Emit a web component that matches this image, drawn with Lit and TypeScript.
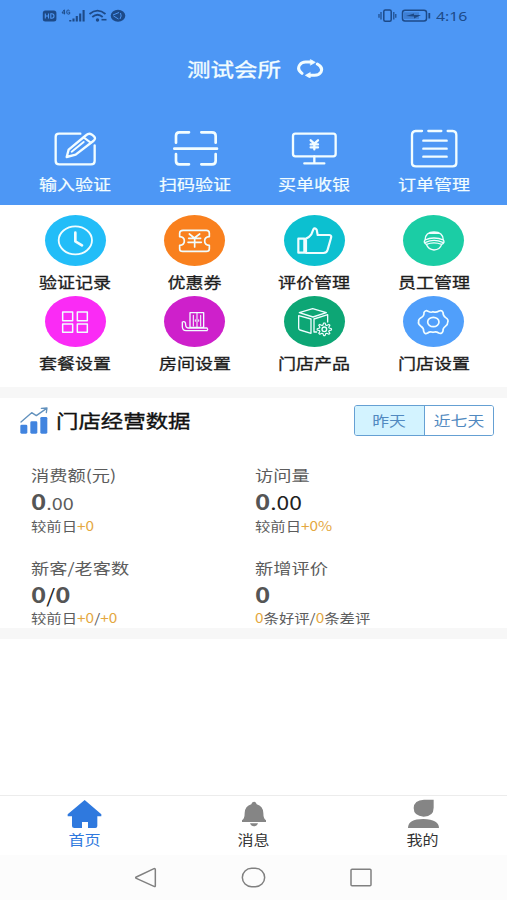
import { LitElement, html, css, svg, TemplateResult } from "lit";
import { customElement, state } from "lit/decorators.js";

// Icons are drawn in third-of-a-pixel units and keep their own viewBox origin.
const icon = (x: number, y: number, w: number, h: number, body: unknown): TemplateResult =>
  html`<svg width=${w / 3} height=${h / 3} viewBox="${x} ${y} ${w} ${h}" fill="none" stroke="currentColor" stroke-linecap="round" stroke-linejoin="round">${body}</svg>`;

const gear = (cx: number, cy: number, r: number, depth: number, teeth: number): string => {
  const pts: string[] = [];
  const n = teeth * 4;
  for (let i = 0; i < n; i++) {
    const a = ((i - 0.5) / n) * Math.PI * 2;
    const rr = i % 4 < 2 ? r : r - depth;
    pts.push(`${(cx + Math.cos(a) * rr * 1.08).toFixed(1)} ${(cy + Math.sin(a) * rr * 0.95).toFixed(1)}`);
  }
  return `M${pts.join("L")}Z`;
};

const icons = {
  edit: icon(160, 55, 136, 115, svg`<g stroke-width="7"><path d="M242 69H178Q168 69 168 78V151Q168 161 179 161H274Q285 161 285 151V104"/><path d="M201 139L207 117L260 73Q268 66 277 72L283 77Q290 84 281 91L228 132Z"/><path d="M252 80L273 96M216 123L252 94" stroke-width="6"/></g>`),
  scan: icon(514, 55, 142, 115, svg`<g stroke-width="8"><path d="M565 65H536Q526 65 526 75V96M602 65H634Q645 65 645 75V96M565 161H536Q526 161 526 151V130M602 161H634Q645 161 645 151V130M521 114H649"/></g>`),
  cash: icon(114, 55, 140, 115, svg`<g stroke-width="7"><rect x="120" y="69" width="128" height="68" rx="7"/><path d="M184 137V156M154 158H214"/><path d="M173 89L184 99L195 89M184 98V116M173 101H195M173 110H195"/></g>`),
  orders: icon(466, 52, 150, 120, svg`<g stroke-width="7"><path d="M505 61H486Q475 62 475 73V157Q475 167 487 167H597Q608 167 608 157V73Q608 62 597 61H582M524 61H563M509 90H579M509 114H579M509 138H579"/></g>`),
  clock: icon(170, 58, 114, 98, svg`<ellipse cx="228" cy="107" rx="50" ry="42" stroke-width="5.5"/><path d="M228 84V110L248 122" stroke-width="8"/>`),
  coupon: icon(530, 64, 112, 84, svg`<path d="M551 74H621Q630 74 630 82V93Q616 94 616 106Q616 118 630 119V130Q630 137 621 137H550Q541 137 541 130V119Q555 118 555 106Q555 94 541 93V82Q541 74 551 74Z" stroke-width="5"/><path d="M570 85L585 97L601 85M568 98H604M566 110H606M586 98V124" stroke-width="5"/>`),
  thumb: icon(128, 66, 112, 88, svg`<g stroke-width="6.5"><path d="M135 104H153V146H135ZM158 104Q166 102 174 91L180 76Q184 70 190 77L193 93H228Q236 94 233 102L223 137Q221 147 210 147H158Z"/></g>`),
  staff: icon(506, 70, 72, 70, svg`<g stroke-width="4"><path d="M515 103Q516 79 542 79Q569 79 570 103Q558 97 542 97Q527 97 515 103ZM517 110Q542 98 568 110M519 116Q542 107 565 116M515 103Q509 111 519 116Q525 132 542 133Q560 132 565 116Q576 111 570 103M525 83H560"/></g>`),
  package: icon(182, 310, 92, 78, svg`<g stroke-width="4.5"><rect x="190" y="319" width="30" height="26"/><rect x="234" y="319" width="30" height="26"/><rect x="190" y="355" width="30" height="25"/><rect x="234" y="355" width="30" height="25"/></g>`),
  room: icon(540, 314, 90, 70, svg`<g stroke-width="4"><rect x="570" y="322" width="41" height="44"/><path d="M580 330V362M591 323V365M602 330V362M586 343V348M596 343V348" stroke-width="3.2"/><path d="M547 350Q557 346 557 359Q557 368 567 368H621Q625 372 621 376H558Q548 376 547 365Z"/></g>`),
  product: icon(126, 302, 112, 94, svg`<g stroke-width="4"><path d="M136 322L176 310L217 322L177 335ZM134 331L171 341V384L138 374Q134 373 134 368ZM180 341L221 328V350M180 341V380H188"/><path d=${gear(211, 372, 20, 6, 8)} stroke-width="3.5"/><circle cx="211" cy="372" r="7"/></g>`),
  settings: icon(490, 304, 104, 90, svg`<g stroke-width="5"><path d="M514 320Q519 312 526 317Q536 322 541 318Q550 322 559 316Q567 312 571 320Q571 331 579 336Q589 342 585 350Q586 356 578 362Q570 368 571 376Q568 386 558 382Q550 376 541 380Q532 376 525 382Q516 387 513 377Q514 368 504 361Q495 354 498 348Q496 342 505 336Q515 331 514 320Z"/><ellipse cx="542" cy="349" rx="17" ry="14"/></g>`),
  chart: icon(56, 62, 92, 86, svg`<g stroke="none" fill="#4184df"><rect x="60" y="118" width="21" height="27" rx="4"/><rect x="90" y="108" width="21" height="37" rx="4"/><rect x="120" y="95" width="21" height="50" rx="4"/></g><path d="M62 110L94 82L108 91L139 69M123 69L140 68L138 82" stroke="#6291bd" stroke-width="4"/>`),
  swap: icon(126, 178, 84, 58, svg`<g stroke-width="9"><path d="M144 221Q128 209 137 196Q143 187 155 187H174M190 193Q208 203 201 217Q195 227 182 227H163"/></g><path d="M170 180L184 188L170 196ZM168 219L154 227L168 235Z" fill="currentColor" stroke-width="2"/>`),
  home: icon(204, 42, 106, 90, svg`<path d="M257 45L307 88V94H295V123Q295 129 289 129H267V111H249V129H226Q219 129 219 123V94H206V88Z" fill="currentColor" stroke="none"/>`),
  bell: icon(724, 46, 78, 82, svg`<path d="M755 58Q756 50 763 50Q770 50 771 58Q790 63 791 84Q791 101 799 106V111H727V106Q735 101 735 84Q736 63 755 58ZM751 115H775Q772 124 763 124Q754 124 751 115Z" fill="currentColor" stroke="none"/>`),
  person: icon(460, 42, 98, 90, svg`<path d="M540 44V68Q540 94 510 95Q480 93 480 69Q481 45 511 44ZM463 129Q463 102 509 102Q556 103 556 129Z" fill="currentColor" stroke="none"/>`),
  back: icon(402, 244, 72, 68, svg`<path d="M462 252Q466 251 466 255V303Q466 307 462 305L409 281Q405 279 409 277Z" stroke-width="4.5"/>`),
  circle: icon(724, 244, 76, 68, svg`<rect x="728" y="251" width="67" height="55" rx="28" stroke-width="4.5"/>`),
  square: icon(290, 244, 72, 68, svg`<rect x="296" y="254" width="60" height="49" rx="3" stroke-width="4.5"/>`),
};

const signals = html`<svg width="84" height="16" viewBox="0 0 84 16" fill="none" stroke="currentColor" stroke-width="1.6">
  <rect x=".8" y="2.5" width="13.6" height="11" rx="2.5" fill="currentColor" stroke="none"/>
  <path d="M3.3 5.5V10.5M6.5 5.5V10.5M3.3 8H6.5M8.8 5.8H9.8Q12 5.8 12 8T9.8 10.2H8.8Z" stroke="#4d97f5" stroke-width="1.1"/>
  <path d="M22.2 1.8L20 5H23.2M22.4 1.8V6.4M27.5 2.6Q24.8 1 24.8 4T27.7 5.8V4.2H26.4" stroke-width="1"/>
  <path d="M28.3 12V13.5M31.5 10.5V13.5M34.8 8V13.5M38.2 5.5V13.5M41.6 2V13.5" stroke-width="2.1"/>
  <path d="M47.5 6Q55.5-.8 63.5 6M50.3 9Q55.5 4.5 60.7 9" stroke-width="1.8"/><circle cx="55.5" cy="12" r="1.7" fill="currentColor" stroke="none"/><path d="M59.5 11.7H64.5" />
  <ellipse cx="76" cy="7.8" rx="7.3" ry="6" fill="currentColor" stroke="none"/><path d="M71 7L77 4.5M71.5 8L76.5 11M78.5 5Q80 8 78 11" stroke="#4d97f5" stroke-width="1"/>
</svg>`;

const battery = html`<svg width="54" height="16" viewBox="0 0 54 16" fill="none" stroke="currentColor" stroke-width="1.5">
  <rect x="5.8" y="2" width="7.4" height="11.2" rx="1.5"/><path d="M3 4V11.5M1 6V9.8M15.8 4V11.5M17.8 6V9.8" stroke-width="1.2"/>
  <rect x="24.5" y="2.3" width="24" height="10.6" rx="2.5"/><rect x="26" y="4.3" width="15" height="6.6" fill="currentColor" opacity=".3" stroke="none"/><path d="M28 8L36 5.5V7H43L36 10.5V8.6Z" fill="currentColor" stroke="none"/><path d="M51.3 5V10.5" stroke-width="1.8"/>
</svg>`;

interface Entry { label: string; icon: TemplateResult; tone?: string; }

@customElement("app-root")
export class AppRoot extends LitElement {
  @state() private range = 0;

  private actions: Entry[] = [
    { label: "输入验证", icon: icons.edit },
    { label: "扫码验证", icon: icons.scan },
    { label: "买单收银", icon: icons.cash },
    { label: "订单管理", icon: icons.orders },
  ];

  private entries: Entry[] = [
    { label: "验证记录", icon: icons.clock, tone: "sky" },
    { label: "优惠券", icon: icons.coupon, tone: "orange" },
    { label: "评价管理", icon: icons.thumb, tone: "cyan" },
    { label: "员工管理", icon: icons.staff, tone: "mint" },
    { label: "套餐设置", icon: icons.package, tone: "pink" },
    { label: "房间设置", icon: icons.room, tone: "purple" },
    { label: "门店产品", icon: icons.product, tone: "green" },
    { label: "门店设置", icon: icons.settings, tone: "blue" },
  ];

  static styles = css`
    :host { display: flex; flex-direction: column; height: 900px; overflow: hidden; background: #fff; color: #1c1c1c; font-family: "Noto Sans CJK SC", sans-serif; }
    * { box-sizing: border-box; }
    svg { display: block; flex: none; }
    .t { display: inline-block; white-space: nowrap; transform: scaleX(1.2); }
    .start { transform-origin: left center; }
    .header { height: 205px; flex: none; background: #4d97f5; color: #f2fdff; }
    .status { height: 32px; padding: 0 40px 0 42px; display: flex; align-items: center; justify-content: space-between; color: #1d4a88; }
    .status .right { display: flex; align-items: center; gap: 4px; }
    .time { font: 13.2px/32px "Noto Sans", sans-serif; width: 31px; }
    .title { height: 76px; display: flex; align-items: center; padding-left: 187px; gap: 14px; }
    .title .name { width: 95px; font-size: 19.6px; line-height: 30px; margin-top: -2px; -webkit-text-stroke: .35px currentColor; }
    .title svg { margin-top: -3px; }
    .grid4 { display: grid; grid-template-columns: repeat(4, 119.5px); padding-left: 15.5px; }
    .cell { display: flex; flex-direction: column; align-items: center; }
    .action { padding-top: 19px; }
    .action .glyph { height: 42px; display: flex; align-items: center; margin-left: 1px; }
    .action .t { font-size: 15px; line-height: 22px; margin-top: 4px; -webkit-text-stroke: .2px currentColor; }
    .entries { height: 182px; flex: none; padding-top: 10px; grid-auto-rows: 81px; align-content: start; }
    .disc { width: 61px; height: 51px; border-radius: 50%; display: grid; place-items: center; color: #f0fdff; }
    .entries .t { font-size: 15px; line-height: 22px; margin-top: 5px; -webkit-text-stroke: .3px currentColor; }
    .sky { background: #22bdf8; } .orange { background: #f9801e; } .cyan { background: #0cc0d0; } .mint { background: #1bcda5; }
    .pink { background: #fa2bf5; } .purple { background: #ce20cb; } .green { background: #0da675; } .blue { background: #509ffb; }
    .band { flex: none; height: 11px; background: #f7f7f7; }
    .head { display: flex; align-items: center; height: 44px; flex: none; padding: 0 13px 0 19px; }
    .head .name { flex: 1; margin-left: 6px; }
    .head .name .t { font-size: 18.7px; line-height: 30px; color: #111; -webkit-text-stroke: .35px currentColor; }
    .switch { display: flex; width: 140px; height: 31px; border: 1.5px solid #65a0d3; border-radius: 3px; overflow: hidden; }
    .switch button { flex: 1; border: 0; padding: 0; background: #fff; color: #5189c0; font: 14px/28px "Noto Sans CJK SC", sans-serif; }
    .switch button + button { border-left: 1.5px solid #65a0d3; }
    .switch .on { background: #d3f3ff; }
    .stats { display: grid; grid-template-columns: 224px 1fr; grid-auto-rows: 92.5px; padding: 21px 0 0 31px; height: 186px; flex: none; }
    .stat { display: flex; flex-direction: column; align-items: flex-start; color: #5c5c5c; }
    .label { font-size: 15.2px; line-height: 22px; }
    .value { font-size: 16.5px; line-height: 32px; height: 32px; }
    .value b { font-size: 21.5px; font-weight: 700; color: #555; }
    .value .dark { font-size: 19px; color: #222; }
    .note { font-size: 12.8px; line-height: 20px; margin-top: -1.5px; }
    .note em { font-style: normal; color: #e4a83f; }
    .space { flex: 1; }
    .tabs { flex: none; height: 60px; border-top: 1px solid #ececec; display: grid; grid-template-columns: repeat(3, 1fr); }
    .tab { display: flex; flex-direction: column; align-items: center; color: #858585; padding-top: 3px; }
    .tab svg { height: 30px; margin-left: 1px; }
    .tab .t { font-size: 13.6px; line-height: 20px; color: #333; transform: scaleX(1.18); }
    .tab.active, .tab.active .t { color: #2f79de; }
    .nav { flex: none; height: 45px; background: #fcfcfc; display: flex; justify-content: center; align-items: center; gap: 83px; color: #808080; }
  `;

  private stat(label: string, value: TemplateResult, note: TemplateResult) {
    return html`<div class="stat">
      <span class="t start label">${label}</span>
      <span class="t start value">${value}</span>
      <span class="t start note">${note}</span>
    </div>`;
  }

  render() {
    return html`
      <header class="header">
        <div class="status">${signals}<div class="right">${battery}<span class="t start time">4:16</span></div></div>
        <div class="title"><span class="name"><span class="t start">测试会所</span></span>${icons.swap}</div>
        <div class="grid4">
          ${this.actions.map((a) => html`<div class="cell action"><div class="glyph">${a.icon}</div><span class="t">${a.label}</span></div>`)}
        </div>
      </header>
      <section class="grid4 entries">
        ${this.entries.map((e) => html`<div class="cell"><div class="disc ${e.tone}">${e.icon}</div><span class="t">${e.label}</span></div>`)}
      </section>
      <div class="band"></div>
      <div class="head">
        ${icons.chart}
        <div class="name"><span class="t start">门店经营数据</span></div>
        <div class="switch">
          ${["昨天", "近七天"].map((s, i) => html`<button class=${this.range === i ? "on" : ""} @click=${() => (this.range = i)}><span class="t">${s}</span></button>`)}
        </div>
      </div>
      <section class="stats">
        ${this.stat("消费额(元)", html`<b>0</b>.00`, html`较前日<em>+0</em>`)}
        ${this.stat("访问量", html`<b>0</b><span class="dark">.00</span>`, html`较前日<em>+0%</em>`)}
        ${this.stat("新客/老客数", html`<b>0</b><span class="dark">/</span><b>0</b>`, html`较前日<em>+0</em>/<em>+0</em>`)}
        ${this.stat("新增评价", html`<b>0</b>`, html`<em>0</em>条好评/<em>0</em>条差评`)}
      </section>
      <div class="band"></div>
      <div class="space"></div>
      <nav class="tabs">
        <div class="tab active">${icons.home}<span class="t">首页</span></div>
        <div class="tab">${icons.bell}<span class="t">消息</span></div>
        <div class="tab">${icons.person}<span class="t">我的</span></div>
      </nav>
      <div class="nav">${icons.back}${icons.circle}${icons.square}</div>
    `;
  }
}
